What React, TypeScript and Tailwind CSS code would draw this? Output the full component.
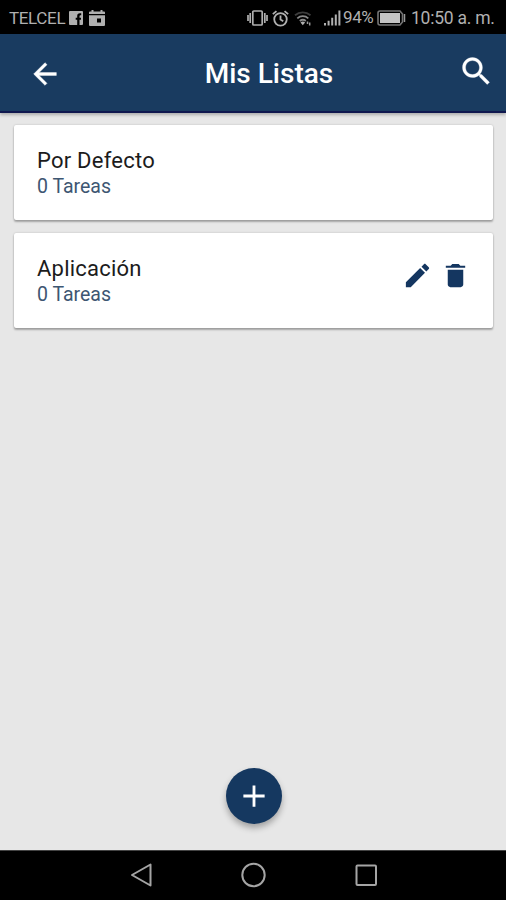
import React from "react";
import { IoMdAdd, IoMdArrowBack, IoMdCreate, IoMdSearch, IoMdTrash } from "react-icons/io";

const lists = [
  { name: "Por Defecto", tasks: 0, editable: false },
  { name: "Aplicación", tasks: 0, editable: true },
];

function StatusBar() {
  return (
    <div className="h-[34px] shrink-0 bg-black text-[#b0b0b0] flex items-center justify-between pl-[9px] pr-[11px] pt-[2px]">
      <div className="flex items-center">
        <span className="w-[57px] text-[17px] tracking-[-0.35px] leading-5 whitespace-nowrap">TELCEL</span>
        <svg viewBox="0 0 14 14" className="w-[14px] h-[14px] ml-[3px]" fill="currentColor">
          <path d="M1 0h12a1 1 0 0 1 1 1v12a1 1 0 0 1-1 1h-2.500V8.800H12V6.700h-1.500V5.300c0-.7.300-1 .9-1h.8V2.300h-1.400C9.100 2.300 8.200 3.400 8.200 5v1.700H6.700v2.100h1.500V14H1a1 1 0 0 1-1-1V1a1 1 0 0 1 1-1Z" />
        </svg>
        <svg viewBox="0 0 16 16" className="w-[16px] h-[16px] ml-[6px]" fill="currentColor" fillRule="evenodd">
          <path d="M2.500 0h2v1.500h7V0h2v1.500H15a1 1 0 0 1 1 1V4H0V2.500a1 1 0 0 1 1-1h1.500ZM0 5.300h16V15a1 1 0 0 1-1 1H1a1 1 0 0 1-1-1ZM8 8.500V12.500h4V8.500Z" />
        </svg>
      </div>

      <div className="flex items-center">
        <svg viewBox="0 0 21 16" className="w-[21px] h-[16px]" fill="none" stroke="currentColor" strokeWidth="1.700">
          <rect x="5.800" y="1" width="9.400" height="14" rx="1" />
          <path d="M3.200 3v10M17.800 3v10M1 5v6M20 5v6" />
        </svg>
        <svg viewBox="0 0 16 16" className="w-[17px] h-[17px] ml-[4px]" fill="none" stroke="currentColor" strokeWidth="1.700">
          <circle cx="8" cy="8.800" r="5.900" />
          <path d="M8 5.200v3.800l2.600 1.700M.8 3.900 4.200 1M15.200 3.900 11.800 1" />
        </svg>
        <svg viewBox="0 0 18 16" className="w-[18px] h-[16px] ml-[5px]" fill="none" strokeWidth="1.800">
          <path d="M1 5.200a12 12 0 0 1 15.500 0" stroke="#3c3c3c" />
          <path d="M3.300 8.300a8.300 8.300 0 0 1 11 0M5.800 11a4.800 4.800 0 0 1 6 0" stroke="#8a8a8a" />
          <path d="m8.800 15.300-2.300-2.700a3.500 3.500 0 0 1 4.600 0Z" fill="currentColor" />
          <path d="M13.500 11.500v2.500M15.700 12.500v3" stroke="#999999" strokeWidth="1.500" />
        </svg>
        <svg viewBox="0 0 17 16" className="w-[17px] h-[16px] ml-[12px]" fill="currentColor">
          <path d="M0 13h2v2.500H0zM3.600 10.800h2v4.700h-2zM7.200 7.800h2v7.700h-2zM10.800 4.500h2v11h-2zM14.400.5h2v15h-2z" />
        </svg>
        <span className="w-[32px] ml-[2px] mb-[2px] text-[17px] tracking-[-0.4px] leading-5">94%</span>
        <svg viewBox="0 0 29 16" className="w-[29px] h-[16px] ml-[2px]">
          <path d="M3 1h20l2.500 3v8L23 15H3a2 2 0 0 1-2-2V3a2 2 0 0 1 2-2Z" fill="none" stroke="#757575" strokeWidth="1.600" />
          <rect x="3" y="3" width="20" height="10" fill="#c4c4c4" />
          <path d="M27.500 4v8" stroke="#999999" strokeWidth="1.500" />
        </svg>
        <span className="w-[84px] ml-[5px] text-[17.500px] tracking-[-0.25px] leading-5 whitespace-nowrap">10:50 a. m.</span>
      </div>
    </div>
  );
}

function Header() {
  return (
    <header className="relative z-10 h-[79px] shrink-0 bg-[#193b60] border-b-2 border-[#10184f] shadow-[0_2px_3px_rgba(0,0,0,0.25)] text-white grid grid-cols-[1fr_auto_1fr] items-center pl-[28px] pr-[12px] pt-[2px]">
      <button aria-label="Volver">
        <IoMdArrowBack className="w-[34px] h-[34px] stroke-current stroke-[6]" />
      </button>
      <h1 className="text-[28px] font-medium leading-8 ml-[16px]">Mis Listas</h1>
      <button aria-label="Buscar" className="justify-self-end mb-[5px]">
        <IoMdSearch className="w-[36px] h-[36px] stroke-current stroke-[4]" />
      </button>
    </header>
  );
}

function NavBar() {
  return (
    <nav className="h-[50px] shrink-0 bg-black border-t border-[#444444] flex items-center justify-between pl-[128px] pr-[127px] pb-[2px]">
      <svg viewBox="0 0 26 26" className="w-[26px] h-[26px]" fill="none" stroke="#a5a5a5" strokeWidth="2" strokeLinejoin="round">
        <path d="M22.500 2.500v21L4 13Z" />
      </svg>
      <svg viewBox="0 0 26 26" className="w-[26px] h-[26px]" fill="none" stroke="#a5a5a5" strokeWidth="2">
        <circle cx="12.500" cy="13" r="11.200" />
      </svg>
      <svg viewBox="0 0 26 26" className="w-[26px] h-[26px]" fill="none" stroke="#a5a5a5" strokeWidth="2">
        <rect x="3.500" y="3.500" width="19.500" height="19.500" rx="1" />
      </svg>
    </nav>
  );
}

export default function App() {
  return (
    <div className="w-[506px] h-[900px] flex flex-col overflow-hidden bg-[#e7e7e7] font-['Roboto',sans-serif]">
      <StatusBar />
      <Header />

      <main className="flex-1 flex flex-col pl-[14px] pr-[13px] pt-[12px] pb-[26px]">
        <ul className="flex flex-col gap-[13px]">
          {lists.map((list) => (
            <li
              key={list.name}
              className="h-[95px] bg-white rounded-[2px] shadow-[0_2px_2px_rgba(0,0,0,0.28),0_0_2px_rgba(0,0,0,0.22)] flex justify-between pl-[23px] pr-[22px] pt-[23px]"
            >
              <div>
                <h2 className="text-[22px] leading-[26px] tracking-[0.23px] text-[#1c1c1c]">{list.name}</h2>
                <p className="text-[19.500px] leading-[26px] text-[#3d5672]">{list.tasks} Tareas</p>
              </div>
              {list.editable && (
                <div className="flex gap-[7px] pt-[4px] text-[#143660]">
                  <IoMdCreate className="w-[31px] h-[31px]" />
                  <IoMdTrash className="w-[31px] h-[31px]" />
                </div>
              )}
            </li>
          ))}
        </ul>

        <button
          aria-label="Agregar lista"
          className="mt-auto self-center w-[56px] h-[56px] rounded-full bg-[#153860] text-white shadow-[0_4px_6px_rgba(0,0,0,0.3)] flex items-center justify-center"
        >
          <IoMdAdd className="w-[34px] h-[34px]" />
        </button>
      </main>

      <NavBar />
    </div>
  );
}
